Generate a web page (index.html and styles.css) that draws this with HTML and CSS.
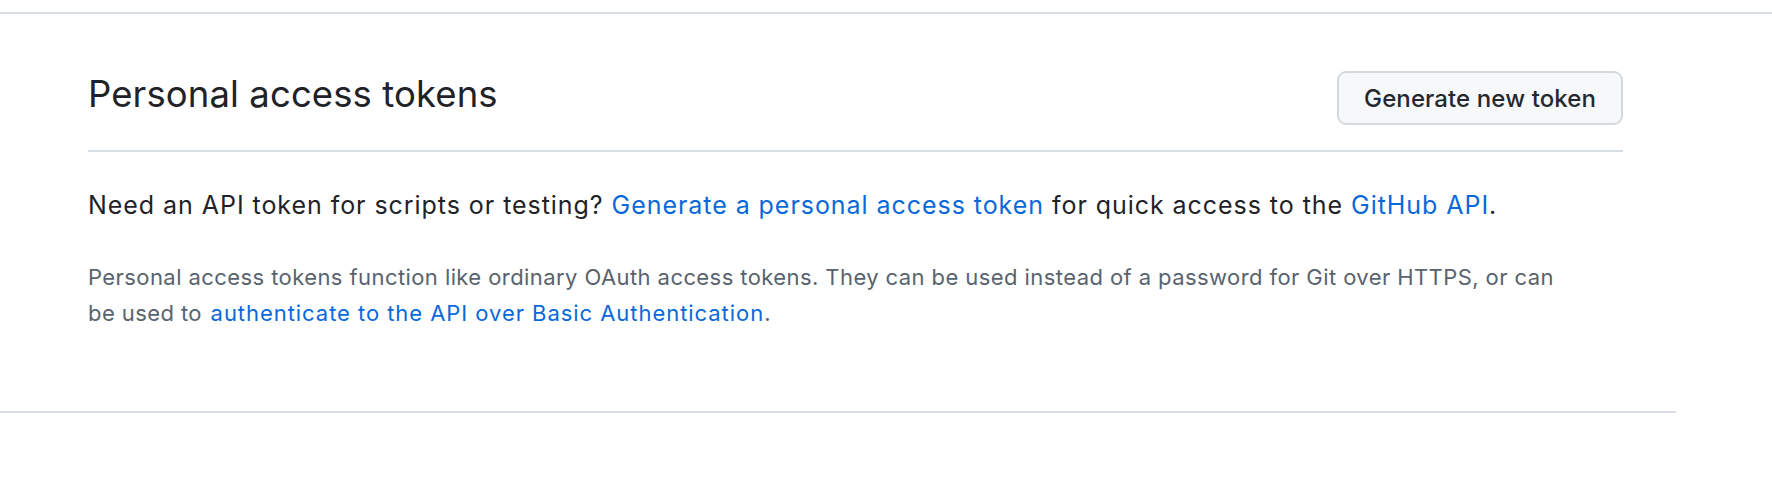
FILE: index.html
```html
<!DOCTYPE html>
<html lang="en">
<head>
    <meta charset="UTF-8">
    <meta name="viewport" content="width=device-width, initial-scale=1.0">
    <title>Personal access tokens</title>
    <link rel="stylesheet" href="styles.css">
</head>
<body>
    <div class="top-rule"></div>
    <div class="settings">
        <div class="subhead">
            <h2 class="subhead-title">Personal access tokens</h2>
            <button class="btn">Generate new token</button>
        </div>
        <p class="lead">Need an API token for scripts or testing? <a href="#">Generate a personal access token</a> for quick access to the <a href="#">GitHub API</a>.</p>
        <p class="note">Personal access tokens function like ordinary OAuth access tokens. They can be used instead of a password for Git over HTTPS, or can be used to <a href="#">authenticate to the API over Basic Authentication</a>.</p>
    </div>
</body>
</html>
```

FILE: styles.css
```css
body {
    margin: 0;
    font-family: Inter, "Noto Sans", sans-serif;
    color: #1f2328;
    background: #fff;
}

a {
    color: #0969da;
    text-decoration: none;
}

.top-rule {
    margin-top: 12px;
    border-top: 2px solid #d8dee4;
}

.settings {
    width: 1676px;
    box-sizing: border-box;
    padding: 57px 53px 80px 88px;
    border-bottom: 2px solid #d8dee4;
}

.subhead {
    display: flex;
    justify-content: space-between;
    align-items: flex-start;
    padding-bottom: 25px;
    border-bottom: 2px solid #d8dee4;
}

.subhead-title {
    margin: 0;
    font-size: 36.5px;
    font-weight: 400;
    line-height: 46px;
    letter-spacing: 0.1px;
}

.btn {
    height: 54px;
    padding: 0 25px;
    font-family: inherit;
    font-size: 24px;
    font-weight: 500;
    letter-spacing: 0.1px;
    color: #24292f;
    background: #f6f8fa;
    border: 2px solid #d5d9de;
    border-radius: 9px;
    cursor: pointer;
}

.lead {
    margin: 35px 0 0;
    font-size: 25px;
    line-height: 36px;
    letter-spacing: 0.95px;
}

.note {
    margin: 36px 0 0;
    max-width: 1480px;
    font-size: 22px;
    line-height: 36px;
    letter-spacing: 0.42px;
    color: #59636e;
}

.note a {
    margin-left: 2px;
    letter-spacing: 0.95px;
}
```
